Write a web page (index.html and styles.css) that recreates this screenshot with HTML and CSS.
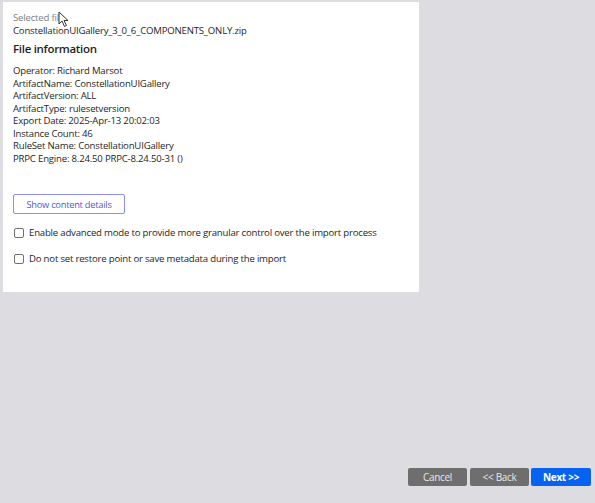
FILE: index.html
```html
<!DOCTYPE html>
<html>
<head>
<meta charset="utf-8">
<link rel="stylesheet" href="styles.css">
</head>
<body>
<div class="page">
  <div class="panel">
    <div class="label">Selected file</div>
    <div class="filename">ConstellationUIGallery_3_0_6_COMPONENTS_ONLY.zip</div>
    <h2 class="heading">File information</h2>
    <div class="info">
      <div>Operator: Richard Marsot</div>
      <div>ArtifactName: ConstellationUIGallery</div>
      <div>ArtifactVersion: ALL</div>
      <div>ArtifactType: rulesetversion</div>
      <div>Export Date: 2025-Apr-13 20:02:03</div>
      <div>Instance Count: 46</div>
      <div>RuleSet Name: ConstellationUIGallery</div>
      <div>PRPC Engine: 8.24.50 PRPC-8.24.50-31 ()</div>
    </div>
    <button class="details">Show content details</button>
    <label class="check"><span class="box"></span>Enable advanced mode to provide more granular control over the import process</label>
    <label class="check"><span class="box"></span>Do not set restore point or save metadata during the import</label>
    <svg class="cursor" width="12" height="17" viewBox="0 0 12 17"><path d="M1 1 L1 13 L4 10 L6.5 15.5 L8.5 14.5 L6 9.5 L10 9.5 Z" fill="#fff" stroke="#333" stroke-width="1"/></svg>
  </div>
  <div class="footer">
    <button class="btn gray cancel">Cancel</button>
    <button class="btn gray">&lt;&lt; Back</button>
    <button class="btn blue">Next &gt;&gt;</button>
  </div>
</div>
</body>
</html>
```
FILE: styles.css
```css
* { box-sizing: border-box; }
html, body { margin: 0; padding: 0; }
body {
  background: #dcdce1;
  font-family: "Open Sans", "Liberation Sans", sans-serif;
  font-size: 9.6px;
  letter-spacing: -0.2px;
  color: #1f1f1f;
}
.page {
  height: 503px;
  display: flex;
  flex-direction: column;
}
.panel {
  position: relative;
  margin: 2px 0 0 3px;
  width: 416px;
  height: 290px;
  background: #fff;
  padding: 9px 10px 0 10px;
}
.label { color: #808080; line-height: 13px; }
.filename { line-height: 13px; }
.heading {
  margin: 4px 0 0 0;
  font-size: 11.5px;
  font-weight: 600;
  letter-spacing: -0.3px;
  line-height: 16px;
}
.info { margin-top: 8px; line-height: 12.5px; }
.details {
  display: block;
  margin-top: 29px;
  width: 112px;
  height: 20px;
  background: #fff;
  border: 1px solid #8a90f3;
  border-radius: 2px;
  color: #4d58e0;
  font-family: inherit;
  font-size: 9.3px;
  letter-spacing: -0.25px;
  padding: 0;
}
.check {
  display: flex;
  align-items: center;
  gap: 5px;
  margin-top: 12px;
  line-height: 14px;
}
.check + .check { margin-top: 12px; }
.box {
  width: 10px;
  height: 10px;
  border: 1px solid #707070;
  border-radius: 2px;
  margin-left: 1px;
}
.cursor { position: absolute; left: 55px; top: 9px; }
.footer {
  margin-top: auto;
  display: flex;
  justify-content: flex-end;
  gap: 2px;
  padding: 0 4px 17px 0;
}
.btn {
  width: 59px;
  height: 18px;
  border: none;
  border-radius: 2px;
  font-family: inherit;
  font-size: 10px;
  letter-spacing: -0.3px;
  color: #fff;
  padding: 0;
}
.btn.cancel { margin-right: 1px; }
.btn.gray { background: #6e6e6e; color: #e8e8e8; }
.btn.blue { background: #0563f0; font-weight: 700; width: 60px; }
```
